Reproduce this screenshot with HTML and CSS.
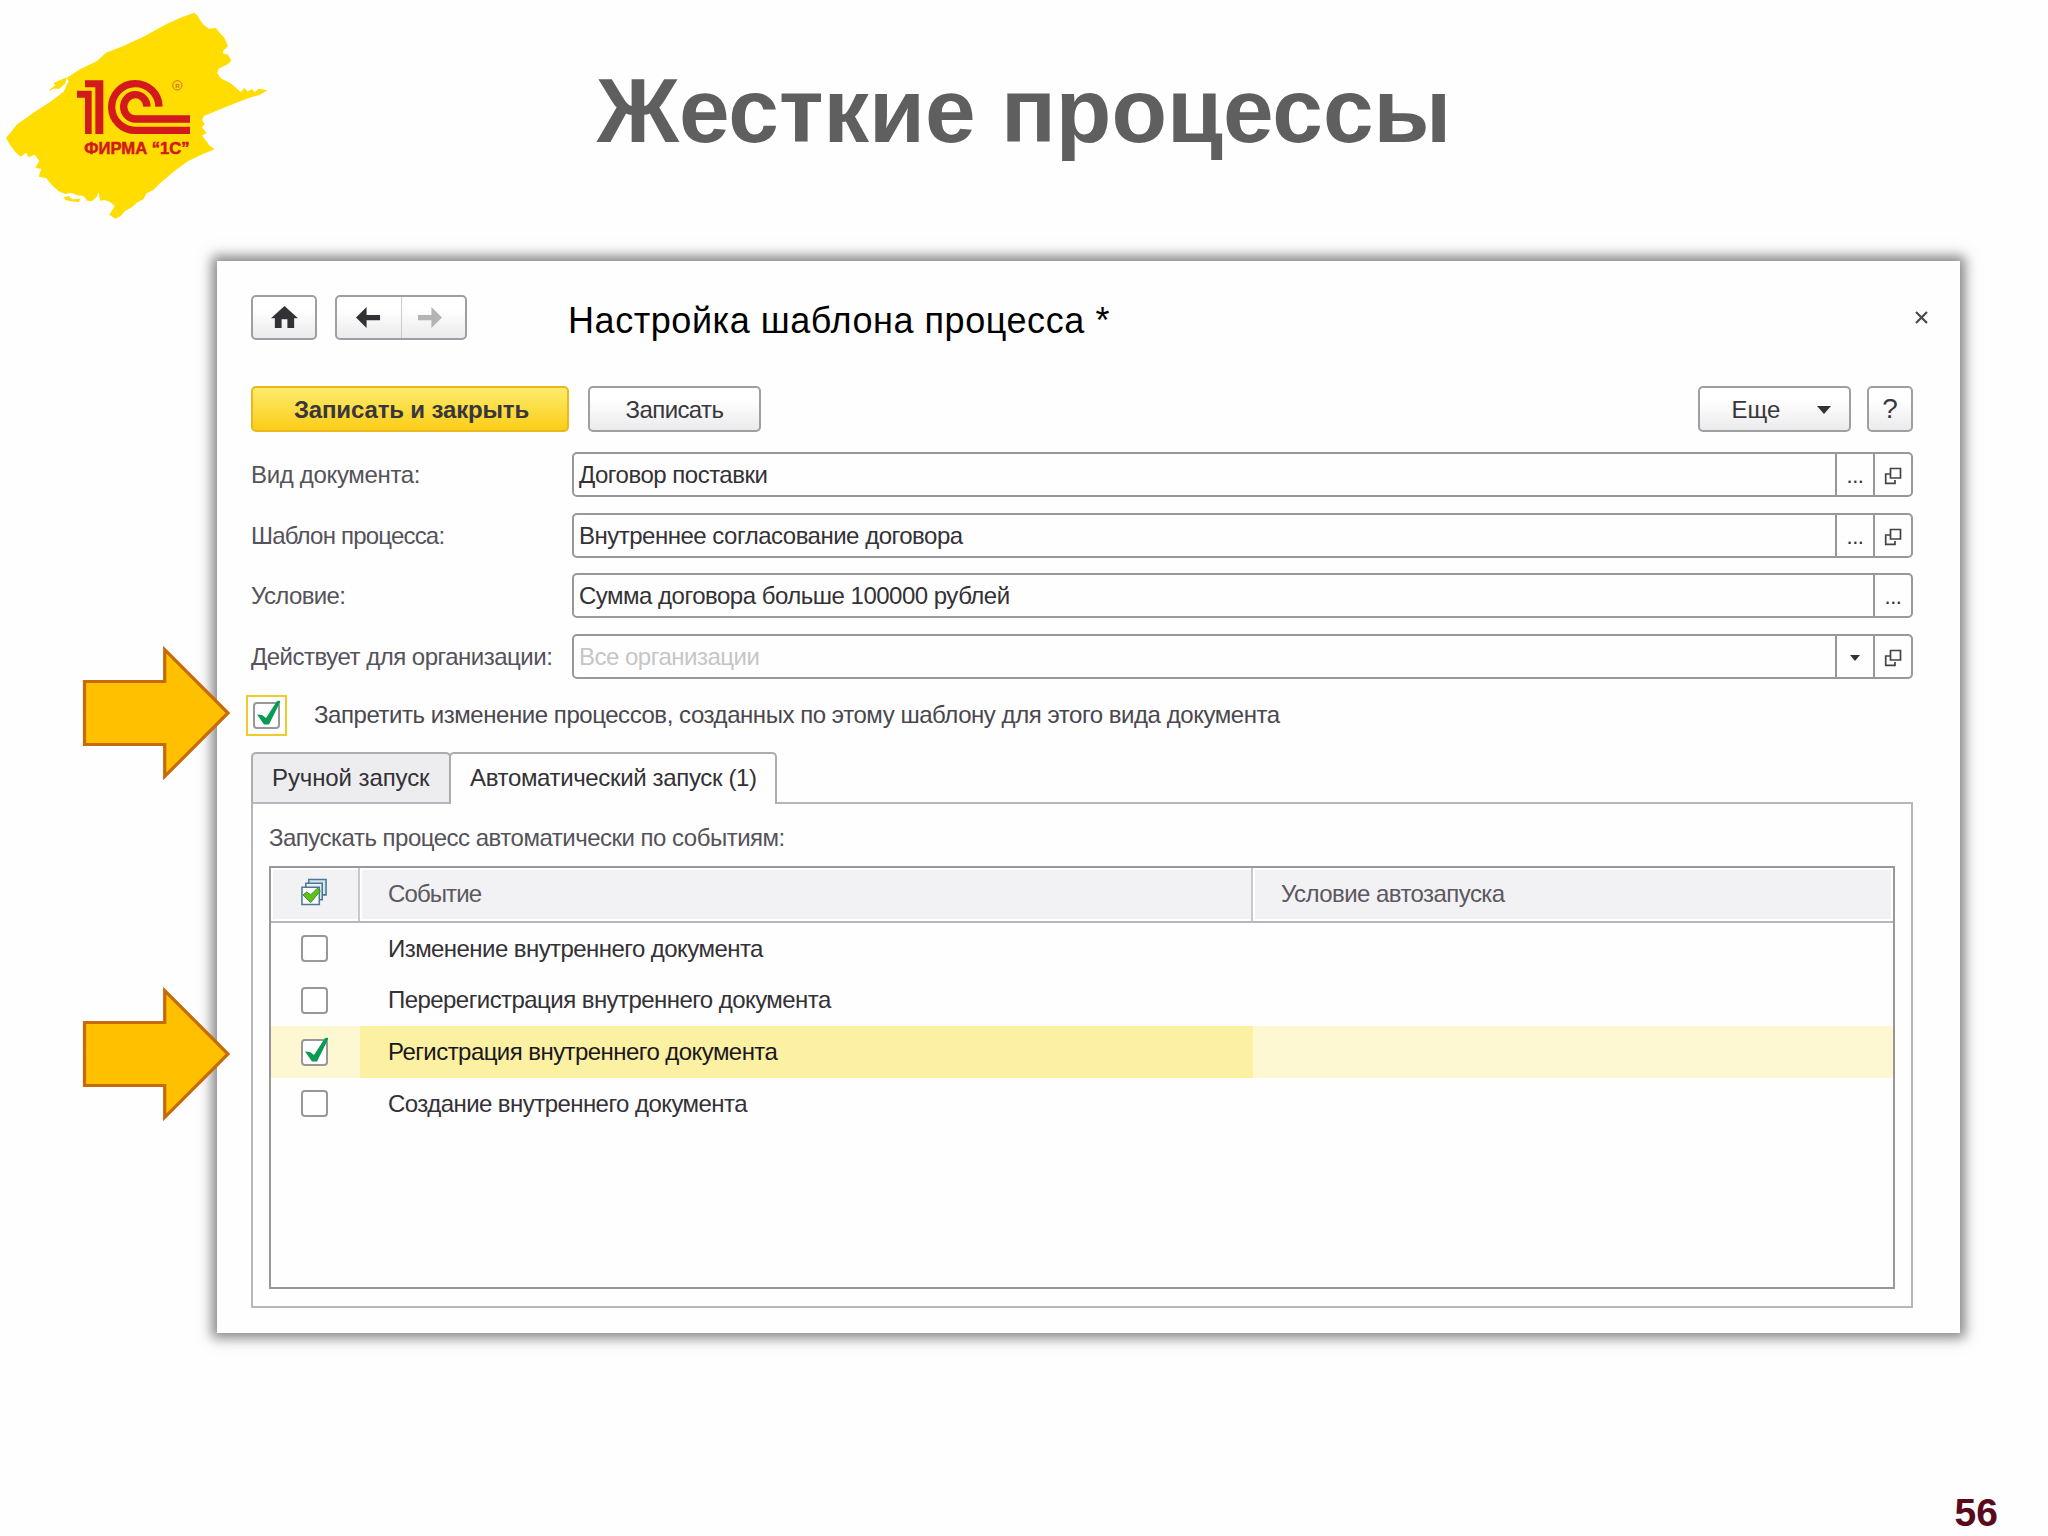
FILE: index.html
```html
<!DOCTYPE html>
<html lang="ru">
<head>
    <meta charset="UTF-8">
    <title>Жесткие процессы</title>
    <link rel="stylesheet" href="styles.css">
</head>
<body>
    <svg class="symbols" width="0" height="0">
        <symbol id="open" viewBox="0 0 18 18">
            <path d="M6.500 1.500H16.500V11H6.500Z M6 7H1.700V16.300H11V13" fill="none" stroke="#444246" stroke-width="1.700"/>
        </symbol>
        <symbol id="tick" viewBox="0 0 27 28">
            <path d="M4 15.500L9 16L13 19L24 2L28 1.500L16 25.500H11Z" fill="#0b9a52"/>
        </symbol>
        <symbol id="arrow" viewBox="0 0 150 140">
            <path d="M4.500 38.500H84.700V6.500L148 70L84.700 133.500V101.500H4.500Z" fill="#ffc000" stroke="#c66a0a" stroke-width="3.200"/>
        </symbol>
    </svg>

    <div class="slide">
        <header class="header">
            <svg class="logo" viewBox="0 0 870 690">
                <path fill="#ffdd00" d="M582 38L592 46L600 60L612 76L628 86L648 84L660 100L672 112L684 138L670 152L668 160L684 164L694 182L684 192L656 206L652 220L664 236L690 248L706 262L722 276L734 264L742 274L756 268L764 276L776 266L802 271L780 284L740 296L700 312L650 332L612 348L606 360L614 372L606 382L620 400L606 406L618 422L628 436L644 448L600 466L560 486L520 516L480 550L460 570L440 580L430 598L410 608L396 622L376 632L362 648L346 656L328 644L344 618L330 606L314 600L300 602L296 576L290 590L276 604L262 602L250 588L232 586L214 578L196 582L176 574L156 556L138 534L116 530L124 506L106 504L118 482L104 464L86 472L78 458L62 470L46 456L30 434L18 414L36 392L50 374L100 338L150 306L190 276L206 244L200 234L240 208L290 184L318 158L370 138L430 110L500 72L540 54Z"/>
                <path fill="#ffdd00" d="M148 270L166 256L160 250L176 242L200 232L196 250L178 266L160 266L148 274ZM192 592L206 588L216 598L240 596L238 606L212 604L196 600Z"/>
                <path fill="#d2191c" d="M231 272H275V402H255V293H231ZM255 241H310V402H286V262H255Z"/>
                <path fill="none" stroke="#d2191c" stroke-width="22" d="M477 320A71 70 0 1 0 407 391H570M441 320A35 36.500 0 1 0 407 357H570"/>
                <circle cx="532" cy="256" r="14" fill="none" stroke="#d2701c" stroke-width="3"/>
                <text class="logo-reg" x="526" y="263">R</text>
                <text class="logo-text" x="253" y="462" textLength="316" lengthAdjust="spacingAndGlyphs">ФИРМА “1С”</text>
            </svg>
            <h1>Жесткие процессы</h1>
        </header>

        <main class="window">
            <div class="titlebar">
                <button class="btn home">
                    <svg width="27" height="22" viewBox="0 0 28 25" preserveAspectRatio="none"><path d="M14 0L28 14H24V25H17V15H11V25H4V14H0Z" fill="#333135"/></svg>
                </button>
                <div class="btn nav">
                    <span class="nav-item"><svg width="25" height="21" viewBox="0 0 26 24" preserveAspectRatio="none"><path d="M0 12L11 0V9H25V15H11V24Z" fill="#333135"/></svg></span>
                    <span class="nav-item forward"><svg width="25" height="21" viewBox="0 0 26 24" preserveAspectRatio="none"><path d="M26 12L15 0V9H1V15H15V24Z" fill="#b4b3b5"/></svg></span>
                </div>
                <h2>Настройка шаблона процесса *</h2>
                <svg class="close" width="13" height="13" viewBox="0 0 13 13"><path d="M1 1L12 12M12 1L1 12" stroke="#4b494d" stroke-width="2.200"/></svg>
            </div>

            <div class="toolbar">
                <button class="btn primary">Записать и закрыть</button>
                <button class="btn save">Записать</button>
                <button class="btn more">Еще <svg width="14" height="8" viewBox="0 0 14 8"><path d="M0 0H14L7 8Z" fill="#333135"/></svg></button>
                <button class="btn help">?</button>
            </div>

            <div class="form">
                <div class="row">
                    <label class="l1">Вид документа:</label>
                    <div class="field">
                        <span class="value">Договор поставки</span>
                        <span class="act">...</span>
                        <span class="act last"><svg width="18" height="18"><use href="#open"/></svg></span>
                    </div>
                </div>
                <div class="row">
                    <label class="l2">Шаблон процесса:</label>
                    <div class="field">
                        <span class="value">Внутреннее согласование договора</span>
                        <span class="act">...</span>
                        <span class="act last"><svg width="18" height="18"><use href="#open"/></svg></span>
                    </div>
                </div>
                <div class="row">
                    <label class="l3">Условие:</label>
                    <div class="field">
                        <span class="value">Сумма договора больше 100000 рублей</span>
                        <span class="act last">...</span>
                    </div>
                </div>
                <div class="row">
                    <label class="l4">Действует для организации:</label>
                    <div class="field">
                        <span class="value placeholder">Все организации</span>
                        <span class="act"><svg width="10" height="6" viewBox="0 0 10 6"><path d="M0 0H10L5 6Z" fill="#333135"/></svg></span>
                        <span class="act last"><svg width="18" height="18"><use href="#open"/></svg></span>
                    </div>
                </div>
            </div>

            <div class="forbid">
                <span class="focus"><span class="check"><svg class="tick"><use href="#tick"/></svg></span></span>
                <span class="forbid-text">Запретить изменение процессов, созданных по этому шаблону для этого вида документа</span>
            </div>

            <div class="tabs">
                <div class="tab">Ручной запуск</div>
                <div class="tab active">Автоматический запуск (1)</div>
            </div>
            <div class="panel">
                <p class="caption">Запускать процесс автоматически по событиям:</p>
                <div class="table">
                    <div class="tr th">
                        <div class="td">
                            <svg width="27" height="28" viewBox="0 0 28 28">
                                <path d="M8 1H26V17H8Z" fill="#d6e6ef" stroke="#4c7796" stroke-width="1.600"/>
                                <path d="M5 5H22V22H5Z" fill="#e6f0f5" stroke="#4c7796" stroke-width="1.600"/>
                                <path d="M1 9H19V27H1Z" fill="#fff" stroke="#4c7796" stroke-width="1.600"/>
                                <path d="M2 17L6 14L10 17L17 10L20 13L10 25Z" fill="#5fc11d" stroke="#3d8f13"/>
                            </svg>
                        </div>
                        <div class="td event">Событие</div>
                        <div class="td">Условие автозапуска</div>
                    </div>
                    <div class="tr">
                        <div class="td"><span class="check"></span></div>
                        <div class="td">Изменение внутреннего документа</div>
                        <div class="td"></div>
                    </div>
                    <div class="tr">
                        <div class="td"><span class="check"></span></div>
                        <div class="td">Перерегистрация внутреннего документа</div>
                        <div class="td"></div>
                    </div>
                    <div class="tr selected">
                        <div class="td"><span class="check"><svg class="tick"><use href="#tick"/></svg></span></div>
                        <div class="td">Регистрация внутреннего документа</div>
                        <div class="td"></div>
                    </div>
                    <div class="tr">
                        <div class="td"><span class="check"></span></div>
                        <div class="td">Создание внутреннего документа</div>
                        <div class="td"></div>
                    </div>
                </div>
            </div>
        </main>

        <svg class="arrow arrow-top"><use href="#arrow"/></svg>
        <svg class="arrow arrow-bottom"><use href="#arrow"/></svg>

        <footer class="page-number">56</footer>
    </div>
</body>
</html>
```
FILE: styles.css
```css
* {
    box-sizing: border-box;
}
body {
    margin: 0;
    font-family: "Liberation Sans", Arial, sans-serif;
    background: #fefefe;
    color: #333135;
}
.symbols {
    position: absolute;
}
.slide {
    position: relative;
    width: 2048px;
    height: 1536px;
    overflow: hidden;
    display: flex;
    flex-direction: column;
}
.header {
    display: grid;
    grid-template-columns: 290px 1fr 290px;
    height: 261px;
}
.logo {
    width: 290px;
    height: 230px;
}
.logo-text {
    font: bold 47px "Liberation Sans", Arial, sans-serif;
    fill: #d2191c;
    stroke: #d2191c;
    stroke-width: 1.5px;
}
.logo-reg {
    font: bold 18px "Liberation Sans", Arial, sans-serif;
    fill: #d2701c;
}
h1 {
    margin: 59px 0 0;
    font-size: 91px;
    line-height: 104px;
    text-align: center;
    white-space: nowrap;
    color: #5f5f60;
}

/* окно программы */
.window {
    width: 1743px;
    height: 1072px;
    margin-left: 217px;
    padding: 34px 47px 0 34px;
    background: #fefefe;
    box-shadow: 0 0 12px 5px rgba(50, 48, 52, 0.6);
    font-size: 24px;
    letter-spacing: -0.5px;
    white-space: nowrap;
}
.btn {
    display: flex;
    align-items: center;
    justify-content: center;
    padding: 0;
    border: 2px solid #a09ea2;
    border-radius: 5px;
    background: linear-gradient(#fff 30%, #ebeaec);
    font: 24px "Liberation Sans", Arial, sans-serif;
    color: #39363d;
}
.titlebar {
    display: flex;
    height: 45px;
}
.home {
    width: 66px;
    height: 45px;
    padding-bottom: 2px;
}
.nav {
    width: 132px;
    height: 45px;
    margin-left: 18px;
}
.nav-item {
    width: 65px;
    height: 100%;
    display: flex;
    align-items: center;
    justify-content: center;
}
.nav-item.forward {
    border-left: 1px solid #cbcacc;
    padding-right: 8px;
}
h2 {
    margin: 5px 0 0 101px;
    font-size: 36px;
    line-height: 42px;
    font-weight: normal;
    letter-spacing: 0.56px;
    color: #000;
}
.close {
    margin: 16px -15px 0 auto;
}
.toolbar {
    display: flex;
    height: 46px;
    margin-top: 46px;
}
.toolbar .btn {
    padding-top: 2px;
}
.toolbar .primary {
    width: 318px;
    padding-left: 3px;
    border-color: #e8b91e;
    background: linear-gradient(#fdec6c, #fbcd18);
    font-weight: bold;
    letter-spacing: -0.15px;
}
.save {
    width: 173px;
    margin-left: 19px;
    letter-spacing: -0.6px;
}
.toolbar .more {
    width: 153px;
    margin-left: auto;
    gap: 37px;
    padding-left: 14px;
}
.toolbar .help {
    width: 46px;
    margin-left: 16px;
    padding-top: 0;
    font-size: 28px;
}

.form {
    display: grid;
    gap: 15.6px;
    margin-top: 20px;
}
.row {
    display: grid;
    grid-template-columns: 321px 1fr;
    height: 45px;
}
.row label {
    line-height: 46px;
    color: #55525a;
}
.l1 {
    letter-spacing: -0.33px;
}
.l2 {
    letter-spacing: -0.8px;
}
.l3 {
    letter-spacing: -0.65px;
}
.field {
    display: flex;
    height: 45px;
    border: 2px solid #99979b;
    border-radius: 5px;
    line-height: 42px;
}
.value {
    flex: 1;
    padding-left: 5px;
}
.act {
    width: 38px;
    height: 41px;
    display: flex;
    align-items: center;
    justify-content: center;
    border-left: 2px solid #99979b;
    padding-top: 3px;
    font-size: 22px;
}
.act.last {
    width: 38px;
}
.placeholder {
    color: #c6c5c8;
}

.forbid {
    display: flex;
    align-items: center;
    height: 41px;
    margin: 16px 0 0 -5px;
    letter-spacing: -0.45px;
    color: #4a474f;
}
.focus {
    width: 41px;
    height: 41px;
    padding: 5px;
    border: 2px solid #f0cb2c;
    margin-right: 27px;
}
.check {
    position: relative;
    display: block;
    width: 27px;
    height: 27px;
    border: 2px solid #99979b;
    border-radius: 4px;
    background: #fff;
}
.tick {
    position: absolute;
    left: -2px;
    top: -5px;
    width: 27px;
    height: 28px;
    overflow: visible;
}

.tabs {
    display: flex;
    height: 50px;
    margin-top: 16px;
}
.tab {
    width: 200px;
    padding-left: 19px;
    border: 2px solid #aeacb0;
    border-bottom: 0;
    border-radius: 5px 5px 0 0;
    line-height: 48px;
    letter-spacing: -0.1px;
    background: #edecee;
}
.tab.active {
    width: 328px;
    height: 52px;
    margin-left: -2px;
    letter-spacing: -0.35px;
    background: #fefefe;
    z-index: 1;
}
.panel {
    height: 506px;
    padding: 16px 16px 0;
    border: 2px solid #b8b6ba;
}
.caption {
    margin: 0 0 10px;
    height: 36px;
    line-height: 36px;
    color: #55525a;
}
.table {
    height: 423px;
    border: 2px solid #99979b;
    letter-spacing: -0.56px;
}
.tr {
    display: grid;
    grid-template-columns: 89px 893px 1fr;
    height: 51.7px;
}
.td {
    display: flex;
    align-items: center;
    padding-left: 28px;
}
.td:first-child {
    padding-left: 30px;
}
.th {
    height: 55px;
    border-bottom: 2px solid #b8b6ba;
    color: #5b585f;
}
.th .td {
    background: #f2f1f3;
    border: 2px solid #fff;
    padding-bottom: 1px;
}
.th .td:first-child {
    padding-left: 28px;
    padding-bottom: 4px;
}
.th .td + .td {
    border-left: 0;
    box-shadow: -2px 0 0 #c9c7cb, inset 2px 0 0 #fff;
}
.th .event {
    letter-spacing: -0.9px;
}
.selected .td {
    background: #fef8d2;
}
.selected .td:nth-child(2) {
    background: #fcf0a3;
    color: #1a181c;
}

/* стрелки поверх окна */
.arrow {
    position: absolute;
    left: 80px;
    width: 150px;
    height: 140px;
}
.arrow-top {
    top: 643px;
}
.arrow-bottom {
    top: 984px;
}
.page-number {
    margin: 157px 50px 0 auto;
    font-size: 39px;
    line-height: 46px;
    font-weight: bold;
    color: #5a0a1c;
}
```
